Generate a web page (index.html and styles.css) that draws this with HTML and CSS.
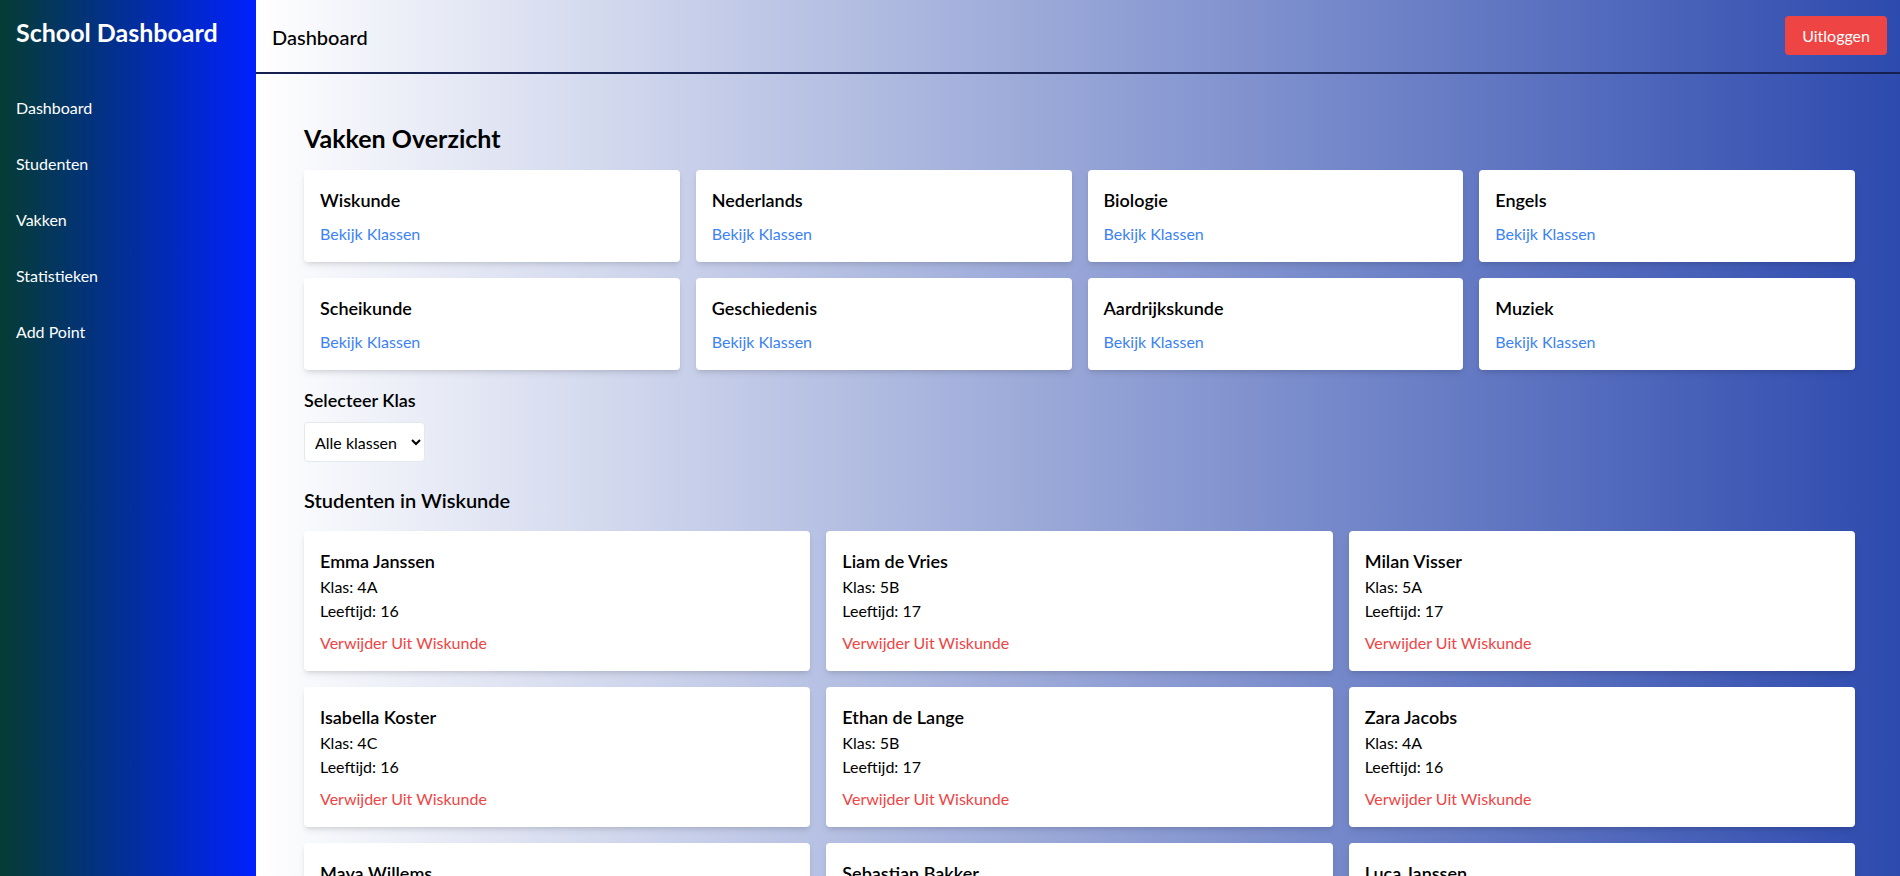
FILE: index.html
```html
<!DOCTYPE html>
<html lang="nl">
<head>
<meta charset="utf-8">
<title>School Dashboard</title>
<link rel="stylesheet" href="styles.css">
</head>
<body>
<div class="layout">
  <aside class="sidebar">
    <h1 class="brand">School Dashboard</h1>
    <nav class="nav">
      <a class="nav-item" href="#">Dashboard</a>
      <a class="nav-item" href="#">Studenten</a>
      <a class="nav-item" href="#">Vakken</a>
      <a class="nav-item" href="#">Statistieken</a>
      <a class="nav-item" href="#">Add Point</a>
    </nav>
  </aside>
  <main class="main">
    <header class="topbar">
      <div class="topbar-title">Dashboard</div>
      <button class="logout">Uitloggen</button>
    </header>
    <section class="content">
      <h2 class="page-title">Vakken Overzicht</h2>
      <div class="subject-grid">
        <div class="card"><div class="card-title">Wiskunde</div><a class="link-blue" href="#">Bekijk Klassen</a></div>
        <div class="card"><div class="card-title">Nederlands</div><a class="link-blue" href="#">Bekijk Klassen</a></div>
        <div class="card"><div class="card-title">Biologie</div><a class="link-blue" href="#">Bekijk Klassen</a></div>
        <div class="card"><div class="card-title">Engels</div><a class="link-blue" href="#">Bekijk Klassen</a></div>
        <div class="card"><div class="card-title">Scheikunde</div><a class="link-blue" href="#">Bekijk Klassen</a></div>
        <div class="card"><div class="card-title">Geschiedenis</div><a class="link-blue" href="#">Bekijk Klassen</a></div>
        <div class="card"><div class="card-title">Aardrijkskunde</div><a class="link-blue" href="#">Bekijk Klassen</a></div>
        <div class="card"><div class="card-title">Muziek</div><a class="link-blue" href="#">Bekijk Klassen</a></div>
      </div>
      <label class="select-label" for="klas">Selecteer Klas</label>
      <select id="klas" class="select">
        <option>Alle klassen</option>
      </select>
      <h3 class="section-title">Studenten in Wiskunde</h3>
      <div class="student-grid">
        <div class="card"><div class="card-title">Emma Janssen</div><p class="meta">Klas: 4A</p><p class="meta">Leeftijd: 16</p><a class="link-red" href="#">Verwijder Uit Wiskunde</a></div>
        <div class="card"><div class="card-title">Liam de Vries</div><p class="meta">Klas: 5B</p><p class="meta">Leeftijd: 17</p><a class="link-red" href="#">Verwijder Uit Wiskunde</a></div>
        <div class="card"><div class="card-title">Milan Visser</div><p class="meta">Klas: 5A</p><p class="meta">Leeftijd: 17</p><a class="link-red" href="#">Verwijder Uit Wiskunde</a></div>
        <div class="card"><div class="card-title">Isabella Koster</div><p class="meta">Klas: 4C</p><p class="meta">Leeftijd: 16</p><a class="link-red" href="#">Verwijder Uit Wiskunde</a></div>
        <div class="card"><div class="card-title">Ethan de Lange</div><p class="meta">Klas: 5B</p><p class="meta">Leeftijd: 17</p><a class="link-red" href="#">Verwijder Uit Wiskunde</a></div>
        <div class="card"><div class="card-title">Zara Jacobs</div><p class="meta">Klas: 4A</p><p class="meta">Leeftijd: 16</p><a class="link-red" href="#">Verwijder Uit Wiskunde</a></div>
        <div class="card"><div class="card-title">Maya Willems</div><p class="meta">Klas: 4B</p><p class="meta">Leeftijd: 16</p><a class="link-red" href="#">Verwijder Uit Wiskunde</a></div>
        <div class="card"><div class="card-title">Sebastian Bakker</div><p class="meta">Klas: 5A</p><p class="meta">Leeftijd: 17</p><a class="link-red" href="#">Verwijder Uit Wiskunde</a></div>
        <div class="card"><div class="card-title">Luca Janssen</div><p class="meta">Klas: 4C</p><p class="meta">Leeftijd: 16</p><a class="link-red" href="#">Verwijder Uit Wiskunde</a></div>
      </div>
    </section>
  </main>
</div>
</body>
</html>
```
FILE: styles.css
```css
* { box-sizing: border-box; }
html, body { margin: 0; padding: 0; }
body {
  font-family: Lato, "Noto Sans", "Liberation Sans", sans-serif;
  color: #000;
  font-size: 16px;
  line-height: 24px;
}
.layout { display: flex; min-height: 100vh; }
.sidebar {
  width: 256px;
  flex: 0 0 256px;
  min-height: 100vh;
  padding: 16px;
  background: linear-gradient(to right, #053c33, #0021ff);
  color: #fff;
}
.brand {
  margin: 0;
  font-size: 25px;
  line-height: 32px;
  font-weight: 700;
}
.nav { display: flex; flex-direction: column; margin-top: 32px; }
.nav-item {
  color: #fff;
  text-decoration: none;
  padding: 16px 0;
  font-size: 16px;
  line-height: 24px;
}
.main {
  flex: 1;
  min-width: 0;
  background: linear-gradient(to right, #ffffff, #2d4aae);
}
.topbar {
  height: 74px;
  display: flex;
  align-items: center;
  justify-content: space-between;
  padding: 0 13px 2px 16px;
  border-bottom: 2px solid #15204f;
}
.topbar-title { font-size: 20px; font-weight: 500; padding-top: 3px; }
.logout {
  background: #ef4444;
  color: #fff;
  border: none;
  border-radius: 4px;
  height: 39px;
  padding: 0 17px;
  font-family: inherit;
  font-size: 16px;
}
.content { padding: 48px 45px 48px 48px; }
.page-title {
  margin: 0 0 16px;
  font-size: 25px;
  line-height: 32px;
  font-weight: 700;
}
.subject-grid {
  display: grid;
  grid-template-columns: repeat(4, 1fr);
  gap: 16px;
  margin-bottom: 16px;
}
.card {
  background: #fff;
  border-radius: 4px;
  padding: 16px;
  box-shadow: 0 4px 6px -1px rgba(0,0,0,0.1), 0 2px 4px -2px rgba(0,0,0,0.1);
}
.card-title { font-size: 18px; line-height: 28px; font-weight: 600; }
.link-blue { display: block; margin-top: 8px; color: #3b82f6; text-decoration: none; }
.link-red { display: block; margin-top: 8px; color: #ef4444; text-decoration: none; }
.meta { margin: 0; }
.select-label {
  display: block;
  font-size: 18px;
  line-height: 28px;
  font-weight: 600;
  margin-bottom: 8px;
}
.select {
  display: block;
  height: 40px;
  width: 121px;
  padding: 0 6px;
  border: 1px solid #e5e7eb;
  border-radius: 4px;
  background: #fff;
  font-family: inherit;
  font-size: 16px;
  color: #000;
}
.section-title {
  margin: 24px 0 17px;
  font-size: 20px;
  line-height: 28px;
  font-weight: 600;
}
.student-grid {
  display: grid;
  grid-template-columns: repeat(3, 1fr);
  gap: 16px;
}
```
